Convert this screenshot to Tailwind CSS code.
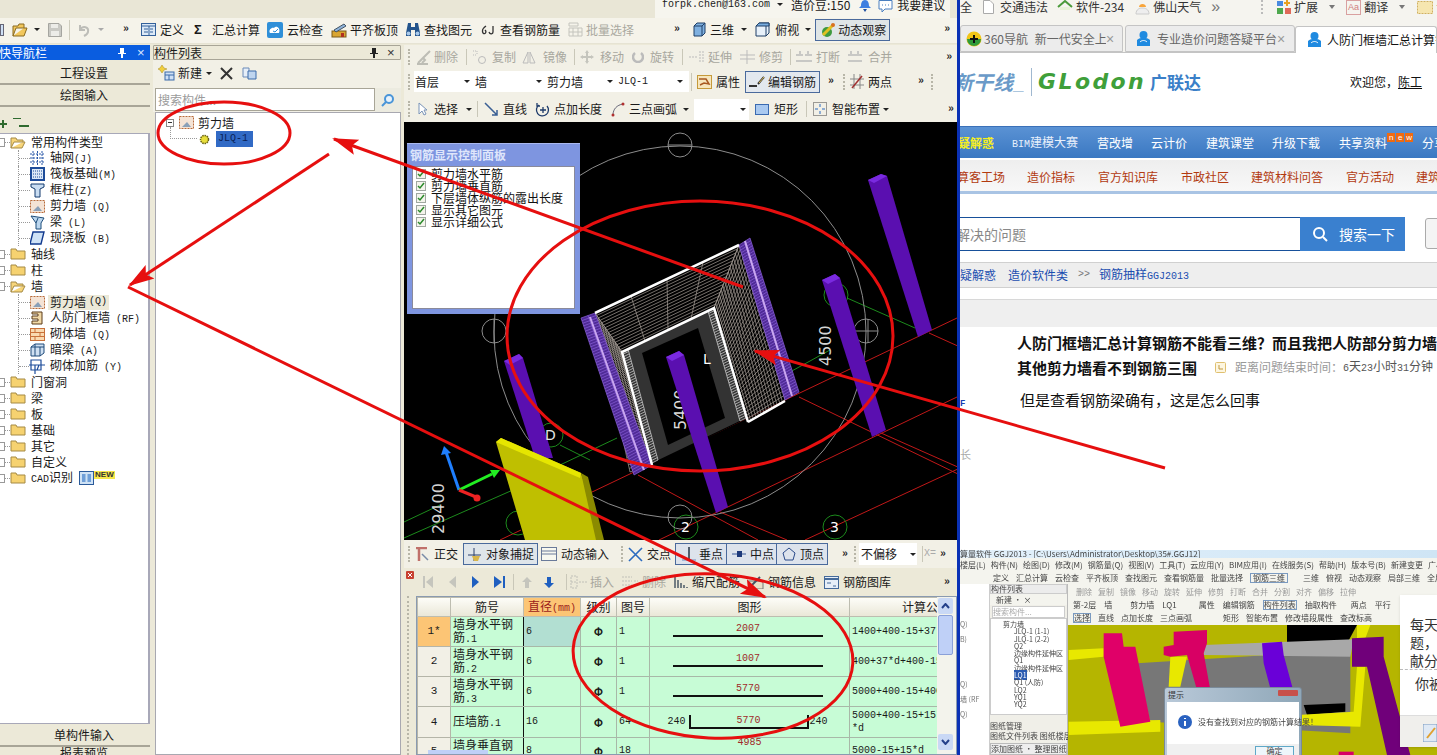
<!DOCTYPE html>
<html lang="zh-CN">
<head>
  <meta charset="UTF-8" />
  <title>钢筋抽样 GGJ2013</title>
  <script src="https://cdn.jsdelivr.net/npm/@tailwindcss/browser@4"></script>
</head>
<body class="bg-white overflow-hidden">
<div class="relative w-[1437px] h-[755px] overflow-hidden flex text-[12px] leading-none text-[#1a1a1a] font-['Noto_Sans_CJK_SC','Liberation_Sans',sans-serif]">

  <!-- software window -->
  <div class="w-[957px] h-full flex-none flex flex-col bg-[#ece9d8]">
    <!-- account strip -->
    <div class="h-[18px] flex-none flex bg-[#e9e6d6]">
      <div class="ml-[655px] w-[295px] h-full bg-[#f6f5ee] flex items-start overflow-hidden whitespace-nowrap [&>*]:flex-none">
        <span class="ml-[7px] font-['Liberation_Mono'] text-[10px] leading-[10px]">forpk.chen@163.com</span>
        <i class="ml-[7px] mt-[3px] w-0 h-0 border-x-[3px] border-x-transparent border-t-[3px] border-t-[#222]"></i>
        <span class="ml-[8px] -mt-[1px] leading-[12px]">造价豆:150</span>
        <svg class="ml-[8px]" width="14" height="12" viewBox="0 0 14 12"><path d="M7 0C4 0 3 3 3 6L1 8H13L11 6C11 3 10 0 7 0Z" fill="#3f7fe0"/><path d="M5 9H9L7 12Z" fill="#2050a0"/></svg>
        <svg class="ml-[6px]" width="15" height="13" viewBox="0 0 15 13"><path d="M1 .5H14V9H7L4 12V9H1Z" fill="#fff" stroke="#4a7fc0"/><path d="M4 5H11" stroke="#4a7fc0" stroke-dasharray="1 2"/></svg>
        <span class="ml-[4px] -mt-[1px] leading-[12px]">我要建议</span>
      </div>
    </div>

    <!-- main toolbar -->
    <div class="h-[26px] flex-none flex items-center pb-[2px] bg-[#f5f3ea] border-b border-[#e6e3d3] whitespace-nowrap [&>*]:flex-none">
      <i class="w-[4px] h-[12px] border border-[#667] bg-[#cfe0f5]"></i>
      <svg class="ml-[8px]" width="16" height="14" viewBox="0 0 16 14"><path d="M1 13V3H6L7 1H12V5H4L1 13H12L15 5H12" fill="#f2c75c" stroke="#8a6a20"/></svg>
      <i class="ml-[6px] w-0 h-0 border-x-[3px] border-x-transparent border-t-[3px] border-t-[#222]"></i>
      <svg class="ml-[8px]" width="14" height="14" viewBox="0 0 14 14"><path d="M.5.5H11L13.5 3V13.5H.5Z" fill="#c9c9c4" stroke="#a5a5a0"/><path d="M3 1H10V5H3ZM3 8H11V13H3Z" fill="#ecece8"/></svg>
      <i class="ml-[7px] w-px h-[20px] bg-[#cfcdbe]"></i>
      <svg class="ml-[8px]" width="12" height="14" viewBox="0 0 12 14"><path d="M2 2V7H7M2 7C5 2 11 4 10 9C9.600 11 8 12 6 13" fill="none" stroke="#bdbdb8" stroke-width="2"/></svg>
      <i class="ml-[8px] w-0 h-0 border-x-[3px] border-x-transparent border-t-[3px] border-t-[#aaa]"></i>
      <span class="ml-[19px] -mt-[4px] w-[9px] text-[11px] font-bold">»</span>
      <svg class="ml-[9px]" width="15" height="13" viewBox="0 0 15 13"><rect x=".5" y=".5" width="14" height="12" fill="#dce9f7" stroke="#33609a"/><path d="M1 3H14M3 6H7M3 9H7M9 6H12M9 9H12M8 3V12" stroke="#33609a"/></svg>
      <span class="ml-[4px]">定义</span>
      <span class="ml-[10px] w-[11px] font-bold text-[13px] leading-none font-['Liberation_Sans']">Σ</span>
      <span class="ml-[7px]">汇总计算</span>
      <svg class="ml-[7px]" width="16" height="16" viewBox="0 0 16 16"><rect width="16" height="16" rx="2" fill="#2f8fd8"/><path d="M3 11C1 8 5 5 7 6C9 3 14 6 12 11Z" fill="#fff"/><path d="M6 9L8 10L11 7" stroke="#2f8fd8" fill="none"/></svg>
      <span class="ml-[4px]">云检查</span>
      <svg class="ml-[8px]" width="16" height="16" viewBox="0 0 16 16"><rect x="1" y="9" width="14" height="6" fill="#d9a531" stroke="#7a5a18"/><path d="M3 8L13 2L15 4L5 10Z" fill="#8fb2d9" stroke="#456"/><path d="M10 11H13V15H10Z" fill="#b03020"/></svg>
      <span class="ml-[3px]">平齐板顶</span>
      <svg class="ml-[7px]" width="16" height="15" viewBox="0 0 16 15"><path d="M3 1H6V5H10V1H13L15 11V14H10V8H6V14H1V11Z" fill="#24548c"/><circle cx="3.500" cy="11.500" r="2" fill="#a9c9ea"/><circle cx="12.500" cy="11.500" r="2" fill="#a9c9ea"/></svg>
      <span class="ml-[3px]">查找图元</span>
      <svg class="ml-[9px]" width="15" height="10" viewBox="0 0 15 10"><path d="M5 1C2 3 1 6 2 8C4 10 6 7 4 5M12 1V7C12 9 9 10 8 7" fill="none" stroke="#333" stroke-width="1.300"/></svg>
      <span class="ml-[4px]">查看钢筋量</span>
      <svg class="ml-[8px]" width="15" height="15" viewBox="0 0 15 15"><path d="M1 1H10V4H1ZM1 6H14V14H1ZM5 6V14M10 6V14M1 10H14" fill="none" stroke="#c4c4bd"/></svg>
      <span class="ml-[3px] text-[#aaa9a0]">批量选择</span>
      <span class="ml-[40px] -mt-[4px] w-[9px] text-[11px] font-bold">»</span>
      <svg class="ml-[10px]" width="13" height="15" viewBox="0 0 13 15"><path d="M1 4L4 1H12V11L9 14H1Z" fill="#7fb0e0" stroke="#1f3f66"/><path d="M1 4H9V14M9 4L12 1" fill="none" stroke="#1f3f66"/></svg>
      <span class="ml-[4px]">三维</span>
      <i class="ml-[7px] w-0 h-0 border-x-[3px] border-x-transparent border-t-[3px] border-t-[#222]"></i>
      <svg class="ml-[8px]" width="15" height="15" viewBox="0 0 15 15"><path d="M1 4L4 1H14V11L11 14H1Z" fill="#e8f1fa" stroke="#1f3f66"/><path d="M4 1H14V4H1ZM11 4V14" fill="#79aee0" stroke="#1f3f66"/></svg>
      <span class="ml-[5px]">俯视</span>
      <i class="ml-[6px] w-0 h-0 border-x-[3px] border-x-transparent border-t-[3px] border-t-[#222]"></i>
      <div class="ml-[4px] w-[75px] h-[22px] flex items-center bg-[#dfe5e6] border border-[#4a6a9c]">
        <svg class="ml-[4px] flex-none" width="16" height="16" viewBox="0 0 16 16"><circle cx="7" cy="10" r="5" fill="#3f9a3f"/><path d="M3 13L13 3" stroke="#e0c020" stroke-width="3"/><circle cx="13" cy="3" r="2" fill="#d87020"/></svg>
        <span class="ml-[2px]">动态观察</span>
      </div>
      <span class="ml-[54px] -mt-[4px] w-[9px] text-[11px] font-bold">»</span>
    </div>

    <!-- panels -->
    <div class="flex-1 flex min-h-0 pt-px">
      <!-- navigation -->
      <div class="w-[150px] flex-none flex flex-col">
        <div class="h-[15px] flex-none flex items-center bg-[#0a5de0] text-white text-[12px] overflow-hidden whitespace-nowrap [&>*]:flex-none">
          <span class="-ml-[1px]">快导航栏</span>
          <svg class="ml-[71px]" width="8" height="10" viewBox="0 0 8 10"><path d="M2 0H6V5H8V6H5V10H3V6H0V5H2Z" fill="#fff"/></svg>
          <span class="ml-[11px] text-[13px] font-['Liberation_Sans'] text-[#dbe6ff]">×</span>
        </div>
        <div class="mt-[3px] h-[22px] flex-none flex items-center justify-center bg-[#ece9d8] border-b-2 border-[#a8a597] pl-[18px]">工程设置</div>
        <div class="h-[22px] flex-none flex items-center justify-center bg-[#ece9d8] border-b-2 border-[#a8a597] pl-[18px]">绘图输入</div>
        <div class="h-[26px] flex-none flex items-end pb-[5px]">
          <svg class="-ml-[1px]" width="8" height="8" viewBox="0 0 8 8"><path d="M3 0H5V3H8V5H5V8H3V5H0V3H3Z" fill="#2f6a2f"/></svg>
          <svg class="ml-[6px]" width="16" height="10" viewBox="0 0 16 10"><path d="M0 0H8V1H0ZM6 7H16V9H6Z" fill="#2f6a2f"/></svg>
        </div>
        <div class="flex-1 min-h-0 bg-white border-y border-r-2 border-[#a8a8b8] overflow-hidden whitespace-nowrap">
          <div class="flex items-center h-4"><i class="w-[5px] h-[9px] border-y border-r border-[#999]"></i><i class="w-[5px] border-t border-dotted border-[#999]"></i><svg width="16" height="13" viewBox="0 0 16 13"><path d="M1 12V2H6L7 4H13V6H4L1 12H12L15 6H13" fill="#f7d57a" stroke="#a58a45"/></svg><span class="ml-[5px]">常用构件类型</span></div>
          <div class="flex items-center h-4"><i class="ml-[18px] w-[12px] h-full border-l border-dotted border-[#999] flex items-center"><b class="w-full border-t border-dotted border-[#999]"></b></i><svg width="15" height="14" viewBox="0 0 15 14"><path d="M3 0V14M7.500 0V14M12 0V14M0 3H15M0 7H15M0 11H15" stroke="#2a58a8" stroke-dasharray="2 1"/></svg><span class="ml-[5px]">轴网<span class="font-['Liberation_Mono'] text-[10px]">(J)</span></span></div>
          <div class="flex items-center h-4"><i class="ml-[18px] w-[12px] h-full border-l border-dotted border-[#999] flex items-center"><b class="w-full border-t border-dotted border-[#999]"></b></i><svg width="15" height="14" viewBox="0 0 15 14"><rect x="1" y="1" width="13" height="12" fill="#dbe8f7" stroke="#1d4c9a" stroke-width="2"/><path d="M3 4H12M3 7H12M3 10H12" stroke="#1d4c9a" stroke-dasharray="1 1"/></svg><span class="ml-[5px]">筏板基础<span class="font-['Liberation_Mono'] text-[10px]">(M)</span></span></div>
          <div class="flex items-center h-4"><i class="ml-[18px] w-[12px] h-full border-l border-dotted border-[#999] flex items-center"><b class="w-full border-t border-dotted border-[#999]"></b></i><svg width="15" height="15" viewBox="0 0 15 15"><path d="M1 1H14V4L10 6V14H5V6L1 4Z" fill="#c9ddf2" stroke="#123a6e"/></svg><span class="ml-[5px]">框柱<span class="font-['Liberation_Mono'] text-[10px]">(Z)</span></span></div>
          <div class="flex items-center h-4"><i class="ml-[18px] w-[12px] h-full border-l border-dotted border-[#999] flex items-center"><b class="w-full border-t border-dotted border-[#999]"></b></i><svg width="15" height="13" viewBox="0 0 15 13"><rect x=".5" y=".5" width="14" height="12" fill="#f4e3d5" stroke="#b86a3a" stroke-dasharray="2 1"/><path d="M3 11L8 6L12 11Z" fill="#8aa0b8"/></svg><span class="ml-[5px]">剪力墙<span class="font-['Liberation_Mono'] text-[10px]"> (Q)</span></span></div>
          <div class="flex items-center h-4"><i class="ml-[18px] w-[12px] h-full border-l border-dotted border-[#999] flex items-center"><b class="w-full border-t border-dotted border-[#999]"></b></i><svg width="15" height="15" viewBox="0 0 15 15"><path d="M1 1L14 3L11 8V14H6V8Z" fill="#bcd7ef" stroke="#1d4c7a"/><path d="M6 8L8 3" stroke="#1d4c7a"/></svg><span class="ml-[5px]">梁<span class="font-['Liberation_Mono'] text-[10px]"> (L)</span></span></div>
          <div class="flex items-center h-4"><i class="ml-[18px] w-[12px] h-full border-l border-dotted border-[#999] flex items-center"><b class="w-full border-t border-dotted border-[#999]"></b></i><svg width="15" height="15" viewBox="0 0 15 15"><path d="M3 1H14L11 13H0Z" fill="#cfe2f6" stroke="#123a8e" stroke-width="1.400"/></svg><span class="ml-[5px]">现浇板<span class="font-['Liberation_Mono'] text-[10px]"> (B)</span></span></div>
          <div class="flex items-center h-4"><i class="w-[5px] h-[9px] border-y border-r border-[#999]"></i><i class="w-[5px] border-t border-dotted border-[#999]"></i><svg width="16" height="12" viewBox="0 0 16 12"><path d="M1 11V1H6L7 3H15V11Z" fill="#f6d270" stroke="#a58a45"/></svg><span class="ml-[5px]">轴线</span></div>
          <div class="flex items-center h-4"><i class="w-[5px] h-[9px] border-y border-r border-[#999]"></i><i class="w-[5px] border-t border-dotted border-[#999]"></i><svg width="16" height="12" viewBox="0 0 16 12"><path d="M1 11V1H6L7 3H15V11Z" fill="#f6d270" stroke="#a58a45"/></svg><span class="ml-[5px]">柱</span></div>
          <div class="flex items-center h-4"><i class="w-[5px] h-[9px] border-y border-r border-[#999]"></i><i class="w-[5px] border-t border-dotted border-[#999]"></i><svg width="16" height="13" viewBox="0 0 16 13"><path d="M1 12V2H6L7 4H13V6H4L1 12H12L15 6H13" fill="#f7d57a" stroke="#a58a45"/></svg><span class="ml-[5px]">墙</span></div>
          <div class="flex items-center h-4"><i class="ml-[18px] w-[12px] h-full border-l border-dotted border-[#999] flex items-center"><b class="w-full border-t border-dotted border-[#999]"></b></i><svg width="15" height="13" viewBox="0 0 15 13"><rect x=".5" y=".5" width="14" height="12" fill="#f4e3d5" stroke="#b86a3a" stroke-dasharray="2 1"/><path d="M3 11L8 6L12 11Z" fill="#8aa0b8"/></svg><span class="ml-[3px] px-[2px] h-[15px] flex items-center gap-[3px] bg-[#ece9d8]">剪力墙<span class="font-['Liberation_Mono'] text-[10px]">(Q)</span></span></div>
          <div class="flex items-center h-4"><i class="ml-[18px] w-[12px] h-full border-l border-dotted border-[#999] flex items-center"><b class="w-full border-t border-dotted border-[#999]"></b></i><svg width="15" height="14" viewBox="0 0 15 14"><path d="M2 1H12V13H2V10H8V8H2V5H8V3H2Z" fill="#f1d9a8" stroke="#5a3a18"/></svg><span class="ml-[5px]">人防门框墙<span class="font-['Liberation_Mono'] text-[10px]"> (RF)</span></span></div>
          <div class="flex items-center h-4"><i class="ml-[18px] w-[12px] h-full border-l border-dotted border-[#999] flex items-center"><b class="w-full border-t border-dotted border-[#999]"></b></i><svg width="15" height="13" viewBox="0 0 15 13"><rect x=".5" y=".5" width="14" height="12" fill="#f9d9b0" stroke="#c8703a"/><path d="M0 4.500H15M0 8.500H15M5 .500V4.500M10 4.500V8.500M5 8.500V12.500" stroke="#c8703a"/></svg><span class="ml-[5px]">砌体墙<span class="font-['Liberation_Mono'] text-[10px]"> (Q)</span></span></div>
          <div class="flex items-center h-4"><i class="ml-[18px] w-[12px] h-full border-l border-dotted border-[#999] flex items-center"><b class="w-full border-t border-dotted border-[#999]"></b></i><svg width="15" height="14" viewBox="0 0 15 14"><path d="M1 4L5 1H14V10L10 13H1Z" fill="#cfe0f2" stroke="#1f4a7a"/><path d="M5 1V13M10 4V13M1 4H14" stroke="#1f4a7a"/></svg><span class="ml-[5px]">暗梁<span class="font-['Liberation_Mono'] text-[10px]"> (A)</span></span></div>
          <div class="flex items-center h-4"><i class="ml-[18px] w-[11px] h-full border-l border-dotted border-[#999] flex items-center"><b class="w-full border-t border-dotted border-[#999]"></b></i><svg width="16" height="15" viewBox="0 0 16 15"><path d="M2 1H12V11H2ZM0 6H16M6 6V15M10 6L8 11" fill="none" stroke="#1d4c9a" stroke-width="1.200"/></svg><span class="ml-[5px]">砌体加筋<span class="font-['Liberation_Mono'] text-[10px]"> (Y)</span></span></div>
          <div class="flex items-center h-4"><i class="w-[5px] h-[9px] border-y border-r border-[#999]"></i><i class="w-[5px] border-t border-dotted border-[#999]"></i><svg width="16" height="12" viewBox="0 0 16 12"><path d="M1 11V1H6L7 3H15V11Z" fill="#f6d270" stroke="#a58a45"/></svg><span class="ml-[5px]">门窗洞</span></div>
          <div class="flex items-center h-4"><i class="w-[5px] h-[9px] border-y border-r border-[#999]"></i><i class="w-[5px] border-t border-dotted border-[#999]"></i><svg width="16" height="12" viewBox="0 0 16 12"><path d="M1 11V1H6L7 3H15V11Z" fill="#f6d270" stroke="#a58a45"/></svg><span class="ml-[5px]">梁</span></div>
          <div class="flex items-center h-4"><i class="w-[5px] h-[9px] border-y border-r border-[#999]"></i><i class="w-[5px] border-t border-dotted border-[#999]"></i><svg width="16" height="12" viewBox="0 0 16 12"><path d="M1 11V1H6L7 3H15V11Z" fill="#f6d270" stroke="#a58a45"/></svg><span class="ml-[5px]">板</span></div>
          <div class="flex items-center h-4"><i class="w-[5px] h-[9px] border-y border-r border-[#999]"></i><i class="w-[5px] border-t border-dotted border-[#999]"></i><svg width="16" height="12" viewBox="0 0 16 12"><path d="M1 11V1H6L7 3H15V11Z" fill="#f6d270" stroke="#a58a45"/></svg><span class="ml-[5px]">基础</span></div>
          <div class="flex items-center h-4"><i class="w-[5px] h-[9px] border-y border-r border-[#999]"></i><i class="w-[5px] border-t border-dotted border-[#999]"></i><svg width="16" height="12" viewBox="0 0 16 12"><path d="M1 11V1H6L7 3H15V11Z" fill="#f6d270" stroke="#a58a45"/></svg><span class="ml-[5px]">其它</span></div>
          <div class="flex items-center h-4"><i class="w-[5px] h-[9px] border-y border-r border-[#999]"></i><i class="w-[5px] border-t border-dotted border-[#999]"></i><svg width="16" height="12" viewBox="0 0 16 12"><path d="M1 11V1H6L7 3H15V11Z" fill="#f6d270" stroke="#a58a45"/></svg><span class="ml-[5px]">自定义</span></div>
          <div class="flex items-center h-4"><i class="w-[5px] h-[9px] border-y border-r border-[#999]"></i><i class="w-[5px] border-t border-dotted border-[#999]"></i><svg width="16" height="12" viewBox="0 0 16 12"><path d="M1 11V1H6L7 3H15V11Z" fill="#f6d270" stroke="#a58a45"/></svg><span class="ml-[5px]"><span class="font-['Liberation_Mono'] text-[10px]">CAD</span>识别</span>
            <svg class="ml-[6px]" width="15" height="14" viewBox="0 0 15 14"><rect x=".5" y=".5" width="14" height="13" fill="#cfe2f5" stroke="#2a5a9a"/><path d="M3 3H6.500V11H3ZM8.500 3H12V11H8.500Z" fill="#6f9fd8"/></svg>
            <span class="-mt-[7px] text-[8px] font-bold text-[#333] bg-[#f6e84a] px-[1px] font-['Liberation_Sans']">NEW</span></div>
        </div>
        <div class="mt-px h-[22px] flex-none flex items-center justify-center border-b-2 border-[#a8a597] pl-[18px]">单构件输入</div>
        <div class="h-[8px] flex-none flex items-start justify-center pl-[18px] overflow-hidden">报表预览</div>
      </div>

      <!-- component list -->
      <div class="ml-[3px] w-[248px] flex-none flex flex-col whitespace-nowrap">
        <div class="h-[15px] flex-none flex items-center border border-[#a8a597] rounded-[1px] [&>*]:flex-none">
          <span>构件列表</span>
          <svg class="ml-[168px]" width="8" height="10" viewBox="0 0 8 10"><path d="M2 0H6V5H8V6H5V10H3V6H0V5H2Z" fill="#222"/></svg>
          <span class="ml-[9px] text-[13px] font-['Liberation_Sans'] text-[#333]">×</span>
        </div>
        <div class="h-[28px] flex-none flex items-center pb-[2px] bg-[#f2f0e6] [&>*]:flex-none">
          <svg class="ml-[5px]" width="17" height="16" viewBox="0 0 17 16"><path d="M4 0L6 3L9 4L6 5L4 8L2 5L0 4L2 3Z" fill="#f2cf3c" stroke="#a68a20" stroke-width=".5"/><rect x="7" y="7" width="9" height="8" fill="#cfe0f5" stroke="#3a6aaa"/><path d="M7 10H16M11 10V15" stroke="#3a6aaa"/></svg>
          <span class="ml-[3px]">新建</span>
          <i class="ml-[4px] w-0 h-0 border-x-[3px] border-x-transparent border-t-[3px] border-t-[#222]"></i>
          <svg class="ml-[8px]" width="13" height="13" viewBox="0 0 13 13"><path d="M1 1L12 12M12 1L1 12" stroke="#333" stroke-width="2"/></svg>
          <svg class="ml-[9px]" width="15" height="13" viewBox="0 0 15 13"><path d="M1 1H7V10H1Z" fill="#e6eef8" stroke="#6a8ab8"/><path d="M6 4H14V12H6Z" fill="#bfd5ef" stroke="#3a6aaa"/></svg>
        </div>
        <div class="h-[24px] flex-none flex bg-[#f2f0e6]">
          <div class="ml-[2px] w-[220px] h-[23px] bg-white border border-[#a8a597] flex items-center pl-[2px] text-[#9b9b9b] text-[12px]">搜索构件...</div>
          <div class="flex-1 flex items-center justify-center bg-[#ecebe0]">
            <svg width="14" height="14" viewBox="0 0 14 14"><circle cx="8" cy="6" r="4" fill="#e7f2fc" stroke="#4a95d8" stroke-width="2"/><path d="M5 9L1 13" stroke="#4a95d8" stroke-width="2"/></svg>
          </div>
        </div>
        <div class="flex-1 min-h-0 ml-[2px] bg-white border border-[#a8a8b0] pt-[1px]">
          <div class="flex items-center h-[17px]"><i class="ml-[10px] w-[8px] h-[8px] border border-[#888] flex items-center justify-center"><b class="w-[4px] border-t border-[#333]"></b></i><svg class="ml-[5px]" width="15" height="13" viewBox="0 0 15 13"><rect x=".5" y=".5" width="14" height="12" fill="#f4e3d5" stroke="#b86a3a" stroke-dasharray="2 1"/><path d="M3 11L8 6L12 11Z" fill="#8aa0b8"/></svg><span class="ml-[4px]">剪力墙</span></div>
          <div class="flex items-center h-[16px]"><i class="ml-[14px] w-[27px] h-[12px] -mt-[12px] border-l border-b border-dotted border-[#999]"></i><svg class="ml-[2px]" width="11" height="11" viewBox="0 0 11 11"><circle cx="5.500" cy="5.500" r="4" fill="#e8de3a" stroke="#6a6418" stroke-dasharray="1.500 .8" stroke-width="1.500"/></svg><span class="ml-[6px] px-[2px] h-[16px] w-[37px] flex items-center bg-[#316ac5] text-[#0a1f55] font-['Liberation_Mono'] text-[10px]">JLQ-1</span></div>
        </div>
      </div>

      <!-- drawing area -->
      <div class="ml-[3px] flex-1 min-w-0 flex flex-col whitespace-nowrap">
        <div class="h-[25px] flex-none flex items-center bg-[#f2f0e6] text-[#a8a79e] pb-[1px] [&>*]:flex-none">
          <i class="ml-[4px] w-[2px] h-[16px] border-l-2 border-dotted border-[#b8b6a8]"></i>
          <svg class="ml-[6px]" width="16" height="16" viewBox="0 0 16 16"><path d="M2 14L14 2M1 15H12M4 12L7 9L9 11L6 14" fill="none" stroke="#bdbdb5" stroke-width="2"/></svg>
          <span class="ml-[2px]">删除</span>
          <i class="ml-[8px] w-px h-[16px] bg-[#c9c7b8]"></i>
          <svg class="ml-[5px]" width="14" height="14" viewBox="0 0 14 14"><circle cx="10" cy="10" r="3.500" fill="none" stroke="#bbb"/><path d="M1 1H5M1 5H5M5 1V5" stroke="#bbb" stroke-dasharray="1 1"/></svg>
          <span class="ml-[6px]">复制</span>
          <svg class="ml-[6px]" width="14" height="14" viewBox="0 0 14 14"><path d="M6 2L1 13H6ZM8 2L13 13H8Z" fill="none" stroke="#bbb"/></svg>
          <span class="ml-[7px]">镜像</span>
          <i class="ml-[7px] w-px h-[16px] bg-[#c9c7b8]"></i>
          <svg class="ml-[5px]" width="14" height="14" viewBox="0 0 14 14"><path d="M7 0L9 3H8V6H11V5L14 7L11 9V8H8V11H9L7 14L5 11H6V8H3V9L0 7L3 5V6H6V3H5Z" fill="#c5c5bd"/></svg>
          <span class="ml-[6px]">移动</span>
          <svg class="ml-[8px]" width="12" height="12" viewBox="0 0 12 12"><path d="M3 2A5 5 0 1 0 9 2" fill="none" stroke="#bbb" stroke-width="2.500"/></svg>
          <span class="ml-[6px]">旋转</span>
          <i class="ml-[8px] w-px h-[16px] bg-[#c9c7b8]"></i>
          <svg class="ml-[6px]" width="15" height="14" viewBox="0 0 15 14"><path d="M0 7H8M11 1V13M14 1V13" stroke="#bbb" stroke-dasharray="2 1"/></svg>
          <span class="ml-[4px]">延伸</span>
          <svg class="ml-[8px]" width="15" height="14" viewBox="0 0 15 14"><path d="M0 5H15M0 9H15M7 0V14" stroke="#bbb"/></svg>
          <span class="ml-[4px]">修剪</span>
          <i class="ml-[7px] w-px h-[16px] bg-[#c9c7b8]"></i>
          <svg class="ml-[5px]" width="16" height="12" viewBox="0 0 16 12"><path d="M0 4H7M9 4H16M0 10H16M4 0V3M12 0V3" stroke="#bbb" stroke-width="1.500"/></svg>
          <span class="ml-[4px]">打断</span>
          <svg class="ml-[8px]" width="14" height="12" viewBox="0 0 14 12"><path d="M0 4H14M0 10H14M3 0V3M10 0V3" stroke="#bbb" stroke-width="1.500"/></svg>
          <span class="ml-[6px]">合并</span>
          <span class="ml-[54px] -mt-[4px] w-[9px] text-[11px] font-bold text-[#222]">»</span>
        </div>
        <div class="h-[26px] flex-none flex items-center bg-[#f2f0e6] pb-[3px] [&>*]:flex-none">
          <i class="ml-[4px] w-[2px] h-[16px] border-l-2 border-dotted border-[#b8b6a8]"></i>
          <div class="ml-[4px] w-[60px] h-[21px] flex items-center bg-white pl-[1px]">首层<i class="ml-[25px] w-0 h-0 border-x-[3px] border-x-transparent border-t-[3px] border-t-[#222]"></i></div>
          <div class="w-[72px] h-[21px] flex items-center bg-white pl-[1px]">墙<i class="ml-[49px] w-0 h-0 border-x-[3px] border-x-transparent border-t-[3px] border-t-[#222]"></i></div>
          <div class="w-[71px] h-[21px] flex items-center bg-white pl-[1px]">剪力墙<i class="ml-[24px] w-0 h-0 border-x-[3px] border-x-transparent border-t-[3px] border-t-[#222]"></i></div>
          <div class="w-[72px] h-[21px] flex items-center bg-white pl-[1px]"><span class="w-[30px] font-['Liberation_Mono'] text-[10px]">JLQ-1</span><i class="ml-[29px] w-0 h-0 border-x-[3px] border-x-transparent border-t-[3px] border-t-[#222]"></i></div>
          <i class="ml-[2px] w-px h-[18px] bg-[#c9c7b8]"></i>
          <svg class="ml-[5px]" width="15" height="14" viewBox="0 0 15 14"><rect x=".5" y=".5" width="14" height="13" fill="#f7e6bc" stroke="#c59a3a"/><path d="M2 4H9L12 9L7 8L3 10" fill="none" stroke="#a85820" stroke-width="1.500"/></svg>
          <span class="ml-[4px]">属性</span>
          <div class="ml-[5px] w-[75px] h-[22px] flex items-center bg-[#e3e8ee] border border-[#4a6a9c]">
            <svg class="ml-[3px] flex-none" width="16" height="14" viewBox="0 0 16 14"><path d="M0 11H8M9 9L15 2" stroke="#333" stroke-width="2"/><path d="M10 8L15 2" stroke="#e0c060"/></svg>
            <span class="ml-[3px]">编辑钢筋</span>
          </div>
          <span class="ml-[8px] -mt-[4px] w-[9px] text-[11px] font-bold">»</span>
          <i class="ml-[6px] w-[2px] h-[16px] border-l-2 border-dotted border-[#b8b6a8]"></i>
          <svg class="ml-[5px]" width="14" height="15" viewBox="0 0 14 15"><path d="M0 5H14M0 11H14M4 0V15M10 0V15" stroke="#888"/><path d="M2 14L12 2" stroke="#a03030" stroke-width="1.500"/></svg>
          <span class="ml-[4px]">两点</span>
          <span class="ml-[26px] -mt-[4px] w-[9px] text-[11px] font-bold">»</span>
          <i class="ml-[4px] w-[2px] h-[16px] border-l-2 border-dotted border-[#b8b6a8]"></i>
        </div>
        <div class="h-[26px] flex-none flex items-center bg-[#f2f0e6] [&>*]:flex-none">
          <i class="ml-[4px] w-[2px] h-[16px] border-l-2 border-dotted border-[#b8b6a8]"></i>
          <svg class="ml-[7px]" width="11" height="14" viewBox="0 0 11 14"><path d="M2 1V12L5 9L7 13L9 12L7 8H10Z" fill="#fff" stroke="#7a94b8"/></svg>
          <span class="ml-[6px]">选择</span>
          <i class="ml-[8px] w-0 h-0 border-x-[3px] border-x-transparent border-t-[3px] border-t-[#222]"></i>
          <i class="ml-[5px] w-px h-[16px] bg-[#c9c7b8]"></i>
          <svg class="ml-[6px]" width="14" height="14" viewBox="0 0 14 14"><path d="M1 1L13 13M13 8V13H8" fill="none" stroke="#3a5f94" stroke-width="1.500"/></svg>
          <span class="ml-[5px]">直线</span>
          <svg class="ml-[8px]" width="15" height="15" viewBox="0 0 15 15"><path d="M4 3A6 6 0 1 0 12 4M2 1V4H5M8 5V11M5 8H11" fill="none" stroke="#1d3a6a" stroke-width="1.300"/></svg>
          <span class="ml-[4px]">点加长度</span>
          <svg class="ml-[9px]" width="14" height="15" viewBox="0 0 14 15"><path d="M2 13C2 7 6 3 12 2" fill="none" stroke="#667"/><circle cx="2" cy="13" r="1.500" fill="#b03030"/><circle cx="12" cy="2" r="1.500" fill="#b03030"/></svg>
          <span class="ml-[4px]">三点画弧</span>
          <i class="ml-[6px] w-0 h-0 border-x-[3px] border-x-transparent border-t-[3px] border-t-[#222]"></i>
          <div class="ml-[5px] w-[55px] h-[21px] flex items-center justify-end pr-[3px] bg-white"><i class="w-0 h-0 border-x-[3px] border-x-transparent border-t-[3px] border-t-[#222]"></i></div>
          <svg class="ml-[6px]" width="14" height="11" viewBox="0 0 14 11"><rect x=".5" y=".5" width="13" height="10" fill="#a9c9f0" stroke="#3a6ab0"/></svg>
          <span class="ml-[5px]">矩形</span>
          <i class="ml-[8px] w-px h-[16px] bg-[#c9c7b8]"></i>
          <svg class="ml-[6px]" width="14" height="14" viewBox="0 0 14 14"><rect x=".5" y=".5" width="13" height="13" fill="none" stroke="#444" stroke-dasharray="1 1"/><path d="M7 2V5M7 9V12M2 7H5M9 7H12" stroke="#2a6ac0"/></svg>
          <span class="ml-[5px]">智能布置</span>
          <i class="ml-[3px] w-0 h-0 border-x-[3px] border-x-transparent border-t-[3px] border-t-[#222]"></i>
          <span class="ml-[59px] -mt-[4px] w-[9px] text-[11px] font-bold">»</span>
        </div>

        <!-- 3D view -->
        <div class="relative h-[418px] flex-none bg-black overflow-hidden">
          <svg class="absolute inset-0" width="553" height="418" viewBox="404 122 553 418">
            <g stroke="#c01818" stroke-width="1" fill="none">
              <path d="M590 493L957 318M500 540L521 530M659 540L957 397M805 540L960 468"/>
              <path d="M799 397L960 475M881 433L960 468M929 333L960 347M638 475L758 540M720 512L787 540"/>
            </g>
            <g stroke="#1c8a1c" stroke-width="1" fill="none">
              <path d="M404 538L531 482M560 465L617 438M659 418L716 388M790 372L830 350M847 298L915 328M404 522L440 505M560 445L590 460"/>
              <circle cx="551" cy="435" r="12"/><circle cx="686" cy="527" r="12"/><circle cx="835" cy="527" r="12"/><circle cx="705" cy="358" r="12"/><circle cx="836" cy="295" r="12"/><circle cx="518" cy="523" r="12"/>
            </g>
            <g stroke="#8c8c8c" stroke-width="1" fill="none">
              <circle cx="680" cy="332" r="186"/>
              <circle cx="680" cy="145" r="12"/><circle cx="494" cy="331" r="12"/><circle cx="866" cy="331" r="12"/><circle cx="680" cy="517" r="12"/>
              <path d="M668 145H692M494 319V343M854 331H878M868 319V343"/>
            </g>
            <!-- wall with door opening -->
            <polygon points="595,313 739,245 785,400 652,465" fill="#000"/>
            <g id="mesh"></g>
            <polygon points="622,352 714,308 746,418 652,463" fill="#333"/>
            <polygon points="642,353 698,328 725,418 668,445" fill="#000"/>
            <g id="fringe"></g>
            <polygon points="581,318 595,313 652,465 634,475" fill="#4f2a96"/>
            <polygon points="739,245 750,238 799,392 785,400" fill="#4f2a96"/>
            <g id="bands"></g>
            <path d="M590 317L644 470M745 241L792 396" stroke="#c9a6f0" stroke-width="2"/>
            <path d="M595 313L739 245M652 465L622 352L714 308L748 422M748 422L785 401" fill="none" stroke="#fff" stroke-width="2.500"/>
            <text x="686" y="430" transform="rotate(-90 686 430)" fill="#ddd" font-size="16" font-family="DejaVu Sans">5400</text>
            <!-- columns -->
            <g fill="#5a0fb0">
              <polygon points="868,180 881,174 887,176 932,330 918,337"/>
              <polygon points="822,280 835,274 840,278 886,430 872,437"/>
              <polygon points="504,361 519,354 523,358 553,458 535,458"/>
              <polygon points="666,357 679,351 684,355 728,507 716,513"/>
            </g>
            <g fill="#7a2ae0">
              <polygon points="868,180 881,174 887,176 874,183"/>
              <polygon points="822,280 835,274 840,278 828,284"/>
              <polygon points="504,361 519,354 523,358 510,365"/>
              <polygon points="666,357 679,351 684,355 672,361"/>
            </g>
            <!-- yellow wall end -->
            <polygon points="496,442 501,438 581,473 603,540 525,540" fill="#bfbf00"/>
            <polygon points="496,442 501,438 581,473 580,478" fill="#e6e600"/>
            <polygon points="581,473 588,477 604,540 596,540" fill="#8a8a00"/>
            <!-- axes -->
            <path d="M459 490L446 452" stroke="#1f7fff" stroke-width="3"/><polygon points="444,446 441,455 451,453" fill="#1f7fff"/>
            <path d="M459 490L492 474" stroke="#22ee22" stroke-width="3"/><polygon points="500,470 490,470 494,478" fill="#22ee22"/>
            <path d="M459 490L476 497" stroke="#ee2222" stroke-width="3"/><circle cx="477" cy="498" r="3.500" fill="#ee2222"/>
            <g font-family="DejaVu Sans" fill="#d5d5d5">
              <text x="831" y="366" transform="rotate(-90 831 366)" font-size="16">4500</text>
              <text x="444" y="534" transform="rotate(-90 444 534)" font-size="16">29400</text>
              <text x="545" y="440" font-size="14" fill="#e5e5e5">D</text>
              <text x="681" y="532" font-size="14" fill="#fff">2</text>
              <text x="830" y="532" font-size="14" fill="#fff">3</text>
              <text x="703" y="364" font-size="14" fill="#fff">L</text>
            </g>
          </svg>
          <!-- rebar display panel -->
          <div class="absolute left-[3px] top-[21px] w-[173px] h-[171px] bg-[#7e95e0] border-t border-[#a9b8ee] flex flex-col">
            <div class="h-[22px] flex items-center pl-[3px] font-bold text-[#dfe6fb]">钢筋显示控制面板</div>
            <div class="mx-[5px] flex-1 mb-[5px] bg-white border border-[#8a8a9a] pl-[3px] pt-[1px] text-[#111] leading-[12px]">
              <div class="flex items-center h-[12px]"><i class="w-[10px] h-[10px] border border-[#a0a8a0] bg-[#f4f4ec] flex items-center justify-center"><svg width="8" height="8" viewBox="0 0 8 8"><path d="M1 4L3 6L7 1" fill="none" stroke="#2a8a2a" stroke-width="1.500"/></svg></i><span class="ml-[5px]">剪力墙水平筋</span></div>
              <div class="flex items-center h-[12px]"><i class="w-[10px] h-[10px] border border-[#a0a8a0] bg-[#f4f4ec] flex items-center justify-center"><svg width="8" height="8" viewBox="0 0 8 8"><path d="M1 4L3 6L7 1" fill="none" stroke="#2a8a2a" stroke-width="1.500"/></svg></i><span class="ml-[5px]">剪力墙垂直筋</span></div>
              <div class="flex items-center h-[12px]"><i class="w-[10px] h-[10px] border border-[#a0a8a0] bg-[#f4f4ec] flex items-center justify-center"><svg width="8" height="8" viewBox="0 0 8 8"><path d="M1 4L3 6L7 1" fill="none" stroke="#2a8a2a" stroke-width="1.500"/></svg></i><span class="ml-[5px]">下层墙体纵筋的露出长度</span></div>
              <div class="flex items-center h-[12px]"><i class="w-[10px] h-[10px] border border-[#a0a8a0] bg-[#f4f4ec] flex items-center justify-center"><svg width="8" height="8" viewBox="0 0 8 8"><path d="M1 4L3 6L7 1" fill="none" stroke="#2a8a2a" stroke-width="1.500"/></svg></i><span class="ml-[5px]">显示其它图元</span></div>
              <div class="flex items-center h-[12px]"><i class="w-[10px] h-[10px] border border-[#a0a8a0] bg-[#f4f4ec] flex items-center justify-center"><svg width="8" height="8" viewBox="0 0 8 8"><path d="M1 4L3 6L7 1" fill="none" stroke="#2a8a2a" stroke-width="1.500"/></svg></i><span class="ml-[5px]">显示详细公式</span></div>
            </div>
          </div>
        </div>

        <!-- snap toolbar -->
        <div class="h-[28px] flex-none flex items-center bg-[#f2f0e6] [&>*]:flex-none">
          <i class="ml-[4px] w-[2px] h-[16px] border-l-2 border-dotted border-[#b8b6a8]"></i>
          <svg class="ml-[5px]" width="15" height="15" viewBox="0 0 15 15"><path d="M1 1H12M4 1V14" stroke="#c0706a" stroke-width="2.500"/><path d="M7 7L13 13" stroke="#7a8ca8" stroke-width="1.500"/></svg>
          <span class="ml-[4px]">正交</span>
          <div class="ml-[5px] w-[75px] h-[22px] flex items-center bg-[#dfe5ea] border border-[#4a6a9c]">
            <svg class="ml-[3px] flex-none" width="15" height="15" viewBox="0 0 15 15"><path d="M1 8H14M7 1V14" stroke="#2a3f6a"/><path d="M5 9H13L11 14H7Z" fill="#d9b64a"/></svg>
            <span class="ml-[4px]">对象捕捉</span>
          </div>
          <svg class="ml-[3px]" width="16" height="14" viewBox="0 0 16 14"><rect x=".5" y=".5" width="15" height="13" fill="#f8f8f0" stroke="#6a7a9a"/><path d="M1 4H15M1 7H15" stroke="#6a7a9a"/></svg>
          <span class="ml-[4px]">动态输入</span>
          <i class="ml-[12px] w-[2px] h-[16px] border-l-2 border-dotted border-[#b8b6a8]"></i>
          <svg class="ml-[5px]" width="15" height="15" viewBox="0 0 15 15"><path d="M1 1L14 14M14 1L1 14" stroke="#2a6ac0" stroke-width="1.600"/></svg>
          <span class="ml-[4px]">交点</span>
          <div class="ml-[4px] w-[52px] h-[22px] flex items-center justify-end pr-[3px] bg-[#dde3ec] border border-[#4a6a9c]">
            <svg class="mr-[3px] flex-none" width="14" height="15" viewBox="0 0 14 15"><path d="M0 13H14" stroke="#6a8ac0"/><path d="M7 0V13" stroke="#234" stroke-width="1.500"/></svg>
            <span>垂点</span>
          </div>
          <div class="w-[50px] h-[22px] flex items-center justify-end pr-[2px] bg-[#dde3ec] border-y border-r border-[#4a6a9c]">
            <svg class="mr-[4px] flex-none" width="14" height="6" viewBox="0 0 14 6"><path d="M0 3H14" stroke="#3a5a9a"/><rect x="5" y="0" width="5" height="6" fill="#1d3a7a"/></svg>
            <span>中点</span>
          </div>
          <div class="w-[51px] h-[22px] flex items-center justify-end pr-[3px] bg-[#dde3ec] border-y border-r border-[#4a6a9c]">
            <svg class="mr-[4px] flex-none" width="14" height="14" viewBox="0 0 14 14"><path d="M7 1L13 6L11 13H3L1 6Z" fill="none" stroke="#2a4a8a"/></svg>
            <span>顶点</span>
          </div>
          <span class="ml-[14px] -mt-[4px] w-[9px] text-[11px] font-bold">»</span>
          <i class="ml-[3px] w-[2px] h-[16px] border-l-2 border-dotted border-[#b8b6a8]"></i>
          <div class="ml-[3px] w-[58px] h-[22px] flex items-center bg-white pl-[2px]">不偏移<i class="ml-[13px] w-0 h-0 border-x-[3px] border-x-transparent border-t-[3px] border-t-[#222]"></i></div>
          <i class="ml-[5px] w-px h-[16px] bg-[#c9c7b8]"></i>
          <span class="ml-[1px] text-[#aaa] font-['Liberation_Mono'] text-[10px]">X=</span>
          <span class="ml-[4px] -mt-[4px] w-[9px] text-[11px] font-bold">»</span>
        </div>

        <!-- rebar table toolbar -->
        <div class="h-[28px] flex-none flex items-center bg-[#ece9d8] [&>*]:flex-none">
          <svg class="ml-[2px] -mt-[14px]" width="8" height="8" viewBox="0 0 8 8"><rect width="8" height="8" rx="1" fill="#c84030"/><path d="M2 2L6 6M6 2L2 6" stroke="#fff"/></svg>
          <svg class="ml-[9px]" width="11" height="12" viewBox="0 0 11 12"><path d="M1 0V12" stroke="#c5c5bd" stroke-width="2"/><path d="M10 0L3 6L10 12Z" fill="#c5c5bd"/></svg>
          <svg class="ml-[15px]" width="7" height="12" viewBox="0 0 7 12"><path d="M7 0L0 6L7 12Z" fill="#c5c5bd"/></svg>
          <svg class="ml-[16px]" width="7" height="12" viewBox="0 0 7 12"><path d="M0 0L7 6L0 12Z" fill="#1f5fc0"/></svg>
          <svg class="ml-[15px]" width="11" height="12" viewBox="0 0 11 12"><path d="M10 0V12" stroke="#1f5fc0" stroke-width="2"/><path d="M0 0L8 6L0 12Z" fill="#1f5fc0"/></svg>
          <i class="ml-[8px] w-px h-[16px] bg-[#c9c7b8]"></i>
          <svg class="ml-[8px]" width="10" height="11" viewBox="0 0 10 11"><path d="M5 0L10 5H7V11H3V5H0Z" fill="#c5c5bd"/></svg>
          <svg class="ml-[12px]" width="10" height="11" viewBox="0 0 10 11"><path d="M3 0H7V6H10L5 11L0 6H3Z" fill="#1f5fc0"/></svg>
          <i class="ml-[12px] w-px h-[16px] bg-[#c9c7b8]"></i>
          <svg class="ml-[3px]" width="18" height="14" viewBox="0 0 18 14"><path d="M1 1H7V13H1ZM1 7H7M9 7H17" fill="none" stroke="#c0c0b8" stroke-dasharray="2 1"/></svg>
          <span class="ml-[2px] text-[#a8a79e]">插入</span>
          <svg class="ml-[7px]" width="18" height="12" viewBox="0 0 18 12"><path d="M1 1H11M1 5H11M1 9H11M13 5H17" fill="none" stroke="#c0c0b8" stroke-dasharray="2 1"/></svg>
          <span class="ml-[3px] text-[#a8a79e]">删除</span>
          <svg class="ml-[8px]" width="16" height="14" viewBox="0 0 16 14"><path d="M1 1V13M4 5V13M7 8V13M10 10V13M13 12V13" stroke="#345" stroke-width="1.300"/></svg>
          <span class="ml-[2px]">缩尺配筋</span>
          <svg class="ml-[8px]" width="16" height="14" viewBox="0 0 16 14"><rect y="6" width="15" height="8" fill="#e7e0c8" stroke="#777"/><path d="M4 10L12 2" stroke="#456" stroke-width="2"/></svg>
          <span class="ml-[4px]">钢筋信息</span>
          <svg class="ml-[8px]" width="15" height="13" viewBox="0 0 15 13"><rect x=".5" y=".5" width="14" height="12" fill="#e7eff8" stroke="#456a9a"/><path d="M1 3H14" stroke="#456a9a" stroke-width="2"/><path d="M3 7H7M9 10H12" stroke="#456a9a"/></svg>
          <span class="ml-[4px]">钢筋图库</span>
          <span class="ml-[53px] -mt-[4px] w-[9px] text-[11px] font-bold">»</span>
        </div>

        <!-- rebar table -->
        <div class="relative flex-1 min-h-0 flex bg-[#ece9d8] pl-[12px] whitespace-normal">
          <i class="absolute left-[3px] top-0 h-full border-l-2 border-dotted border-[#b8b6a8]"></i>
          <div class="w-[541px] border border-[#8a9ab0] overflow-hidden relative">
            <table class="table-fixed w-[521px] border-collapse bg-[#c7fcd6]">
              <colgroup><col class="w-[33px]"><col class="w-[73px]"><col class="w-[57px]"><col class="w-[36px]"><col class="w-[33px]"><col class="w-[200px]"><col class="w-[89px]"></colgroup>
              <tr class="h-[19px] bg-gradient-to-b from-[#fdfdf8] to-[#e9e6d6] text-center">
                <th class="font-normal border border-[#bdbdb0]"></th>
                <th class="font-normal border border-[#bdbdb0]">筋号</th>
                <th class="font-normal border border-[#bdbdb0] bg-[#fcc575] text-[#9a1a1a]">直径<span class="font-['Liberation_Mono'] text-[10px]">(mm)</span></th>
                <th class="font-normal border border-[#bdbdb0]">级别</th>
                <th class="font-normal border border-[#bdbdb0]">图号</th>
                <th class="font-normal border border-[#bdbdb0]">图形</th>
                <th class="font-normal border border-[#bdbdb0] text-right whitespace-nowrap overflow-hidden">计算公</th>
              </tr>
              <tr class="h-[28px]">
                <td class="text-center bg-[#fcc575] border border-[#b5b5a8] font-['Liberation_Mono'] text-[11px]">1*</td>
                <td class="border border-[#a8b8a8] border-r-[#111] px-[2px] leading-[13px]">墙身水平钢筋<span class="font-['Liberation_Mono'] text-[10px]">.1</span></td>
                <td class="border border-[#a8b8a8] bg-[#b2dfd2] pl-[2px] font-['Liberation_Mono'] text-[10px]">6</td>
                <td class="border border-[#a8b8a8] text-center text-[11px] font-bold">Φ</td>
                <td class="border border-[#a8b8a8] pl-[2px] font-['Liberation_Mono'] text-[10px]">1</td>
                <td class="border border-[#a8b8a8]"><div class="ml-[23px] mb-[3px] w-[150px] text-center text-[#a02a2a] font-['Liberation_Mono'] text-[10px] leading-[12px] border-b-2 border-[#111]">2007</div></td>
                <td class="border border-[#a8b8a8] pl-[2px] whitespace-nowrap overflow-hidden font-['Liberation_Mono'] text-[10px]">1400+400-15+37*d</td>
              </tr>
              <tr class="h-[28px]">
                <td class="text-center bg-[#f2f0e6] border border-[#b5b5a8] font-['Liberation_Mono'] text-[11px]">2</td>
                <td class="border border-[#a8b8a8] border-r-[#111] px-[2px] leading-[13px]">墙身水平钢筋<span class="font-['Liberation_Mono'] text-[10px]">.2</span></td>
                <td class="border border-[#a8b8a8] pl-[2px] font-['Liberation_Mono'] text-[10px]">6</td>
                <td class="border border-[#a8b8a8] text-center text-[11px] font-bold">Φ</td>
                <td class="border border-[#a8b8a8] pl-[2px] font-['Liberation_Mono'] text-[10px]">1</td>
                <td class="border border-[#a8b8a8]"><div class="ml-[23px] mb-[3px] w-[150px] text-center text-[#a02a2a] font-['Liberation_Mono'] text-[10px] leading-[12px] border-b-2 border-[#111]">1007</div></td>
                <td class="border border-[#a8b8a8] pl-[2px] whitespace-nowrap overflow-hidden font-['Liberation_Mono'] text-[10px]">400+37*d+400-15</td>
              </tr>
              <tr class="h-[28px]">
                <td class="text-center bg-[#f2f0e6] border border-[#b5b5a8] font-['Liberation_Mono'] text-[11px]">3</td>
                <td class="border border-[#a8b8a8] border-r-[#111] px-[2px] leading-[13px]">墙身水平钢筋<span class="font-['Liberation_Mono'] text-[10px]">.3</span></td>
                <td class="border border-[#a8b8a8] pl-[2px] font-['Liberation_Mono'] text-[10px]">6</td>
                <td class="border border-[#a8b8a8] text-center text-[11px] font-bold">Φ</td>
                <td class="border border-[#a8b8a8] pl-[2px] font-['Liberation_Mono'] text-[10px]">1</td>
                <td class="border border-[#a8b8a8]"><div class="ml-[23px] mb-[3px] w-[150px] text-center text-[#a02a2a] font-['Liberation_Mono'] text-[10px] leading-[12px] border-b-2 border-[#111]">5770</div></td>
                <td class="border border-[#a8b8a8] pl-[2px] whitespace-nowrap overflow-hidden font-['Liberation_Mono'] text-[10px]">5000+400-15+400</td>
              </tr>
              <tr class="h-[31px]">
                <td class="text-center bg-[#f2f0e6] border border-[#b5b5a8] font-['Liberation_Mono'] text-[11px]">4</td>
                <td class="border border-[#a8b8a8] border-r-[#111] px-[2px]">压墙筋<span class="font-['Liberation_Mono'] text-[10px]">.1</span></td>
                <td class="border border-[#a8b8a8] pl-[2px] font-['Liberation_Mono'] text-[10px]">16</td>
                <td class="border border-[#a8b8a8] text-center text-[11px] font-bold">Φ</td>
                <td class="border border-[#a8b8a8] pl-[2px] font-['Liberation_Mono'] text-[10px]">64</td>
                <td class="border border-[#a8b8a8]"><div class="flex justify-center items-center pr-[4px] font-['Liberation_Mono'] text-[10px]"><span>240</span><div class="ml-[3px] mr-[1px] w-[120px] h-[14px] border-x-2 border-b-2 border-[#111] text-center text-[#a02a2a] leading-[12px]">5770</div><span>240</span></div></td>
                <td class="border border-[#a8b8a8] pl-[2px] font-['Liberation_Mono'] text-[10px] leading-[13px] overflow-hidden"><div class="whitespace-nowrap">5000+400-15+15*</div>*d</td>
              </tr>
              <tr class="h-[29px] align-top">
                <td class="text-center bg-[#f2f0e6] border border-[#b5b5a8] font-['Liberation_Mono'] text-[11px] pt-[8px]">5</td>
                <td class="border border-[#a8b8a8] border-r-[#111] px-[2px] leading-[13px]">墙身垂直钢筋</td>
                <td class="border border-[#a8b8a8] pl-[2px] font-['Liberation_Mono'] text-[10px] pt-[8px]">8</td>
                <td class="border border-[#a8b8a8] text-center text-[11px] font-bold pt-[8px]">Φ</td>
                <td class="border border-[#a8b8a8] pl-[2px] font-['Liberation_Mono'] text-[10px] pt-[8px]">18</td>
                <td class="border border-[#a8b8a8] text-center text-[#a02a2a] font-['Liberation_Mono'] text-[10px]">4985</td>
                <td class="border border-[#a8b8a8] pl-[2px] pt-[8px] whitespace-nowrap overflow-hidden font-['Liberation_Mono'] text-[10px]">5000-15+15*d</td>
              </tr>
            </table>
            <!-- vertical scrollbar -->
            <div class="absolute top-0 right-0 w-[19px] h-full bg-[#f3f3ec] pl-[1px] flex flex-col">
              <div class="w-[15px] h-[16px] mt-[1px] bg-[#c9d8f5] rounded-[2px] flex items-center justify-center"><svg width="9" height="6" viewBox="0 0 9 6"><path d="M1 5L4.500 1L8 5" fill="none" stroke="#25418a" stroke-width="2"/></svg></div>
              <div class="w-[15px] h-[40px] mt-px bg-[#bfd0f7] border border-[#8aa0d8] rounded-[2px]"></div>
              <div class="flex-1"></div>
              <div class="w-[15px] h-[16px] mb-[4px] bg-[#c9d8f5] rounded-[2px] flex items-center justify-center"><svg width="9" height="6" viewBox="0 0 9 6"><path d="M1 1L4.500 5L8 1" fill="none" stroke="#25418a" stroke-width="2"/></svg></div>
            </div>
            <div class="absolute left-[11px] bottom-0 w-[60px] h-[4px] bg-[#bfd0f7]"></div>
          </div>
        </div>
      </div>
    </div>
  </div>

  <!-- task separator -->
  <div class="w-[3px] flex-none h-full bg-[#0a31b5]"></div>

  <!-- browser window -->
  <div class="relative flex-1 min-w-0 h-full flex flex-col bg-white overflow-hidden whitespace-nowrap">
    <!-- favourites bar -->
    <div class="h-[25px] flex-none flex items-center pb-[11px] bg-[#f5f4ef] text-[#333] [&>*]:flex-none">
      <span>全</span>
      <svg class="ml-[11px]" width="11" height="14" viewBox="0 0 11 14"><path d="M.5.5H7L10.500 4V13.500H.5Z" fill="#fff" stroke="#aaa"/></svg>
      <span class="ml-[6px]">交通违法</span>
      <svg class="ml-[9px]" width="16" height="15" viewBox="0 0 16 15"><path d="M1 7L8 1L15 7" fill="none" stroke="#4a9a3a" stroke-width="2"/><path d="M3 7H13V10H3Z" fill="#e8f2d8"/></svg>
      <span class="ml-[3px]">软件-234</span>
      <svg class="ml-[11px]" width="15" height="15" viewBox="0 0 15 15"><path d="M1 14C1 9 5 8 7 8C10 8 14 9 14 14Z" fill="#eee" stroke="#ccc"/><path d="M4 7C4 3 11 3 11 7Z" fill="#f8a53a"/></svg>
      <span class="ml-[3px]">佛山天气</span>
      <span class="ml-[10px] text-[16px] text-[#777] font-['Liberation_Sans']">»</span>
      <i class="ml-[41px] w-[2px] h-[14px] border-l-2 border-dotted border-[#bbb]"></i>
      <svg class="ml-[14px]" width="15" height="15" viewBox="0 0 15 15"><rect x="0" y="8" width="6" height="6" fill="#4ea84e"/><rect x="8" y="8" width="6" height="6" fill="#e06a5a"/><rect x="0" y="1" width="6" height="5" fill="#4a8ae0"/><path d="M10 0V6M7 3H13" stroke="#e8a020" stroke-width="2"/></svg>
      <span class="ml-[2px]">扩展</span>
      <i class="ml-[11px] w-0 h-0 border-x-[3px] border-x-transparent border-t-[4px] border-t-[#777]"></i>
      <span class="ml-[11px] w-[15px] h-[15px] border border-[#d9a0a0] text-[#d08080] text-[9px] flex items-center justify-center font-['Liberation_Sans']">Aa</span>
      <span class="ml-[3px]">翻译</span>
      <i class="ml-[11px] w-0 h-0 border-x-[3px] border-x-transparent border-t-[4px] border-t-[#777]"></i>
      <svg class="ml-[12px]" width="16" height="15" viewBox="0 0 16 15"><rect x=".5" y="1.500" width="15" height="12" fill="#f6e6b0" stroke="#d0b060" stroke-dasharray="2 1"/></svg>
      <span class="ml-[3px]">计</span>
    </div>
    <!-- tabs -->
    <div class="h-[27px] flex-none flex bg-[#f5f4ef] text-[#666]">
      <div class="w-[163px] flex-none h-full flex items-center bg-[#ececec] border border-[#c4c4c4] rounded-t-[3px] overflow-hidden">
        <svg class="ml-[5px] flex-none" width="16" height="16" viewBox="0 0 16 16"><circle cx="8" cy="8" r="7.500" fill="#f2c518"/><path d="M1 8A7 7 0 0 0 15 8Z" fill="#2f9a3a"/><path d="M8 4V12M4 8H12" stroke="#111" stroke-width="2"/></svg>
        <span class="ml-[2px] w-[122px] flex-none overflow-hidden">360导航_新一代安全上</span>
        <span class="text-[14px] text-[#999] font-['Liberation_Sans']">×</span>
      </div>
      <div class="ml-[2px] w-[170px] flex-none h-full flex items-center bg-[#ececec] border border-[#c4c4c4] rounded-t-[3px] overflow-hidden">
        <svg class="ml-[10px] flex-none" width="15" height="16" viewBox="0 0 15 16"><circle cx="7.500" cy="4" r="4" fill="#1f8ae0"/><path d="M1 15V9C4 6 11 6 14 9V15Z" fill="#1f8ae0"/><path d="M4 11C6 9 9 9 11 11" stroke="#fff" fill="none"/></svg>
        <span class="ml-[6px] w-[120px] flex-none overflow-hidden">专业造价问题答疑平台</span>
        <span class="text-[14px] text-[#999] font-['Liberation_Sans']">×</span>
      </div>
      <div class="flex-1 h-full flex items-center bg-white border-t border-x border-[#c4c4c4] rounded-t-[3px] overflow-hidden text-[#111] relative top-px">
        <svg class="ml-[11px] flex-none" width="15" height="16" viewBox="0 0 15 16"><circle cx="7.500" cy="4" r="4" fill="#1f8ae0"/><path d="M1 15V9C4 6 11 6 14 9V15Z" fill="#1f8ae0"/><path d="M4 11C6 9 9 9 11 11" stroke="#fff" fill="none"/></svg>
        <span class="ml-[5px] flex-none">人防门框墙汇总计算钢筋</span>
      </div>
    </div>
    <!-- site header -->
    <div class="h-[74px] flex-none flex items-center pb-[16px] bg-white border-t border-[#c4c4c4] [&>*]:flex-none">
      <span class="w-[71px] -ml-[7px] text-[20px] leading-none italic font-bold text-[#6a9ac8] overflow-hidden">新干线_</span>
      <i class="ml-[7px] w-px h-[28px] bg-[#a0b8d0]"></i>
      <span class="ml-[6px] w-[108px] text-[22px] leading-none italic font-bold text-[#3f9f3a] font-['DejaVu_Sans'] tracking-[2.4px]">GLodon</span>
      <span class="ml-[4px] text-[17px] font-bold text-[#3a7fc8]">广联达</span>
      <span class="ml-[149px] text-[#111]">欢迎您，<span class="underline">陈工</span></span>
    </div>
    <!-- site nav -->
    <div class="h-[32px] flex-none flex items-center bg-gradient-to-b from-[#5a92d4] to-[#3a78c2] text-white border-t border-[#3a70b8] [&>*]:flex-none">
      <span class="font-bold text-[#f6f020] w-[34px] flex justify-end overflow-hidden"><span class="flex-none">疑解惑</span></span>
      <span class="ml-[18px] text-[#e8f0fb]"><span class="font-['Liberation_Mono'] text-[10px]">BIM</span>建模大赛</span>
      <span class="ml-[19px]">营改增</span>
      <span class="ml-[18px]">云计价</span>
      <span class="ml-[19px]">建筑课堂</span>
      <span class="ml-[18px]">升级下载</span>
      <span class="ml-[19px]">共享资料</span>
      <span class="-mt-[11px] flex gap-[1px] text-[8px] font-['Liberation_Sans']"><b class="w-[8px] h-[9px] leading-[9px] text-center bg-[#f06a10] font-normal">n</b><b class="w-[8px] h-[9px] leading-[9px] text-center bg-[#f06a10] font-normal">e</b><b class="w-[8px] h-[9px] leading-[9px] text-center bg-[#f06a10] font-normal">w</b></span>
      <span class="ml-[9px]">分享</span>
    </div>
    <!-- site sub nav -->
    <div class="mt-[2px] h-[34px] flex-none flex items-center pt-[3px] bg-gradient-to-b from-[#eeeeee] to-[#f8f8f8] border-b-[3px] border-[#a9c4e4] text-[#b23a10] overflow-hidden [&>*]:flex-none">
      <span class="-ml-[3px]">算客工场</span>
      <span class="ml-[22px]">造价指标</span>
      <span class="ml-[23px]">官方知识库</span>
      <span class="ml-[23px]">市政社区</span>
      <span class="ml-[22px]">建筑材料问答</span>
      <span class="ml-[23px]">官方活动</span>
      <span class="ml-[22px]">建筑行业</span>
    </div>
    <!-- search -->
    <div class="mt-[23px] h-[34px] flex-none flex [&>*]:flex-none">
      <div class="w-[340px] h-full flex items-center bg-white border-y border-[#17509a] text-[14px] text-[#888] overflow-hidden">
        <span class="-ml-[4px]">解决的问题</span>
      </div>
      <div class="w-[105px] h-full flex items-center bg-[#3a80cf] text-white text-[14px]">
        <svg class="ml-[13px] flex-none" width="15" height="15" viewBox="0 0 15 15"><circle cx="6" cy="6" r="5" fill="none" stroke="#fff" stroke-width="2"/><path d="M10 10L14 14" stroke="#fff" stroke-width="2"/></svg>
        <span class="ml-[11px]">搜索一下</span>
      </div>
      <div class="ml-[20px] w-[20px] h-[31px] mt-px bg-[#f4f4f4] border border-[#aaa] rounded-[3px]"></div>
    </div>
    <!-- breadcrumb -->
    <div class="mt-[11px] h-[26px] flex-none flex items-center bg-[#eeeeee] border-y border-[#d0d0d0] text-[#1a4db0] [&>*]:flex-none">
      <span>疑解惑</span>
      <span class="ml-[12px]">造价软件类</span>
      <span class="ml-[10px] text-[#777] font-['Liberation_Mono'] text-[10px]">&gt;&gt;</span>
      <span class="ml-[9px]">钢筋抽样<span class="font-['Liberation_Mono'] text-[10px]">GGJ2013</span></span>
    </div>
    <div class="mt-[11px] h-[28px] flex-none bg-[#efefef] border-t border-[#d8d8d8]"></div>
    <!-- question -->
    <div class="flex-none pl-[57px] text-[#111]">
      <div class="mt-[4px] text-[15px] leading-[24px] font-bold">人防门框墙汇总计算钢筋不能看三维？而且我把人防部分剪力墙</div>
      <div class="flex items-center h-[24px] text-[15px] font-bold [&>*]:flex-none">
        <span>其他剪力墙看不到钢筋三围</span>
        <svg class="ml-[18px]" width="11" height="11" viewBox="0 0 11 11"><rect x=".5" y=".5" width="10" height="10" rx="1" fill="#fdf6e0" stroke="#e0c070"/><path d="M4 3V7H8" fill="none" stroke="#c09840"/></svg>
        <span class="ml-[9px] text-[12px] font-normal text-[#999]">距离问题结束时间：</span>
        <span class="text-[12px] font-normal text-[#555]"><span class="font-['Liberation_Mono'] text-[10px]">6</span>天<span class="font-['Liberation_Mono'] text-[10px]">23</span>小时<span class="font-['Liberation_Mono'] text-[10px]">31</span>分钟</span>
      </div>
      <div class="mt-[9px] ml-[3px] text-[15px] leading-[24px] font-normal">但是查看钢筋梁确有，这是怎么回事</div>
    </div>

    <!-- pasted screenshot -->
    <div class="absolute left-0 bottom-0 w-[477px] h-[207px] bg-[#f0efe8] flex flex-col text-[8px] text-[#444] overflow-hidden">
      <div class="h-[2px] flex-none bg-white"></div>
      <div class="h-[8px] flex-none flex items-center bg-gradient-to-r from-[#e3f1fb] to-[#cfe5f5] blur-[0.4px]">算量软件 GGJ2013 - [C:\Users\Administrator\Desktop\35#.GGJ12]</div>
      <div class="h-[14px] flex-none flex items-center gap-[5px] bg-[#f4f4ee] blur-[0.4px] [&>*]:flex-none"><span>楼层(L)</span><span>构件(N)</span><span>绘图(D)</span><span>修改(M)</span><span>钢筋量(Q)</span><span>视图(V)</span><span>工具(T)</span><span>云应用(Y)</span><span>BIM应用(I)</span><span>在线服务(S)</span><span>帮助(H)</span><span>版本号(B)</span><span>新建变更</span><span>广小二</span></div>
      <div class="h-[12px] flex-none flex items-center gap-[7px] pl-[33px] bg-[#f4f4ee] blur-[0.4px] [&>*]:flex-none"><span>定义</span><span>汇总计算</span><span>云检查</span><span>平齐板顶</span><span>查找图元</span><span>查看钢筋量</span><span>批量选择</span><span class="px-[2px] border border-[#7a9ac0]">钢筋三维</span><span class="ml-[8px]">三维</span><span>俯视</span><span>动态观察</span><span>局部三维</span><span>全屏</span><span>缩放</span></div>
      <div class="flex-1 min-h-0 flex">
        <div class="w-[30px] flex-none bg-white border-r border-[#ccc] text-[7px] text-[#777] pt-[37px] space-y-[8px] blur-[0.4px]"><div>Q)</div><div>B)</div><div class="pt-[30px]">Q)</div><div>墙 (RF</div><div>Q)</div></div>
        <div class="w-[78px] flex-none flex flex-col border-r border-[#bbb] blur-[0.4px]">
          <div class="h-[10px] flex-none flex items-center bg-[#ececec] border border-[#ccc]">构件列表</div>
          <div class="h-[11px] flex-none flex items-center pl-[6px] bg-[#f4f4ee]">新建 · ×</div>
          <div class="mt-[1px] h-[12px] flex-none flex items-center mx-[2px] bg-white border border-[#ccc] text-[#aaa]">搜索构件...</div>
          <div class="h-[97px] flex-none bg-white border border-[#ccc] pl-[12px] pt-[2px] leading-[7.300px] text-[7px] overflow-hidden">
            <div>剪力墙</div><div class="pl-[11px]">JLQ-1 (1-1)</div><div class="pl-[11px]">JLQ-1 (2-2)</div><div class="pl-[11px]">Q2</div><div class="pl-[11px]">边缘构件延伸区</div><div class="pl-[11px]">Q1</div><div class="pl-[11px]">边缘构件延伸区</div><div class="pl-[11px]"><span class="bg-[#2a5ab0] text-white">LQ1</span></div><div class="pl-[11px]">Q1 (人防)</div><div class="pl-[11px]">LQ2</div><div class="pl-[11px]">YQ1</div><div class="pl-[11px]">YQ2</div>
          </div>
          <div class="mt-[6px] h-[9px] flex-none flex items-center">图纸管理</div>
          <div class="h-[11px] flex-none flex items-center">图纸文件列表 图纸楼层</div>
          <div class="mt-[2px] h-[12px] flex-none flex items-center border border-[#bbb] bg-[#eee]">添加图纸 · 整理图纸</div>
        </div>
        <div class="flex-1 min-w-0 flex flex-col">
          <div class="h-[14px] flex-none flex items-center gap-[6px] pl-[8px] pt-[2px] bg-[#f4f4ee] text-[#999] blur-[0.4px] [&>*]:flex-none"><span>删除</span><span>复制</span><span>镜像</span><span>移动</span><span>旋转</span><span>延伸</span><span>修剪</span><span>打断</span><span>合并</span><span>分割</span><span>对齐</span><span>偏移</span><span>拉伸</span></div>
          <div class="h-[13px] flex-none flex items-center gap-[8px] pl-[5px] bg-[#f4f4ee] blur-[0.4px] [&>*]:flex-none"><span>第-2层</span><span>墙</span><span class="ml-[10px]">剪力墙</span><span>LQ1</span><span class="ml-[14px]">属性</span><span>编辑钢筋</span><span class="border border-[#7a9ac0]">构件列表</span><span>抽取构件</span><span class="ml-[6px]">两点</span><span>平行</span></div>
          <div class="h-[14px] flex-none flex items-center gap-[7px] pl-[5px] bg-[#f4f4ee] blur-[0.4px] [&>*]:flex-none"><span class="border border-[#7a9ac0]">选择</span><span>直线</span><span>点加长度</span><span>三点画弧</span><span class="ml-[24px]">矩形</span><span>智能布置</span><span>修改墙段属性</span><span>查改标高</span></div>
          <div class="flex-1 min-h-0">
            <svg class="block blur-[0.4px]" width="369" height="130" viewBox="333 255 1107 390" preserveAspectRatio="none">
              <rect x="333" y="255" width="1107" height="390" fill="#b5b500"/>
              <polygon points="990,255 1200,255 1165,320 990,315" fill="#000"/>
              <polygon points="540,370 1180,330 1180,580 580,545" fill="#777"/>
              <polygon points="740,315 1190,298 1180,350 740,345" fill="#a8a8a8"/>
              <polygon points="1040,495 1165,490 1165,515 1050,525" fill="#000"/>
              <polygon points="335,330 440,325 440,350 335,360" fill="#e8e800"/>
              <polygon points="335,545 610,540 610,575 335,585" fill="#e8e800"/>
              <polygon points="1020,525 1190,515 1200,380 1225,380 1210,560 1020,555" fill="#e8e800"/>
              <polygon points="1200,255 1240,255 1225,295 1200,295" fill="#e8e800"/>
              <polygon points="640,350 690,350 670,440 635,440" fill="#e8e800"/>
              <polygon points="440,280 495,280 500,320 535,320 580,545 490,560 440,350" fill="#e00068"/>
              <polygon points="650,275 750,270 750,310 740,340 760,450 720,450 690,345 640,350 620,345 620,320 650,315" fill="#d80064"/>
              <polygon points="915,310 975,305 980,345 1030,530 960,520 920,370" fill="#6a00d8"/>
              <polygon points="1185,295 1280,290 1280,350 1360,645 1290,645 1230,380 1185,380" fill="#70007a"/>
              <polygon points="1145,635 1190,635 1190,645 1145,645" fill="#d80064"/>
            </svg>
          </div>
        </div>
      </div>
      <!-- message box over the pasted scene -->
      <div class="absolute left-[204px] top-[139px] w-[138px] h-[70px] bg-gradient-to-r from-[#b9c9d9] to-[#8fa7b8] rounded-t-[3px] border border-[#7a8a99] flex flex-col">
        <div class="h-[14px] flex-none flex items-center pl-[3px] text-[#333] relative">提示<i class="absolute right-[3px] top-[2px] w-[20px] h-[6px] bg-[#c8504a] rounded-[1px]"></i></div>
        <div class="mx-[2px] flex-1 bg-white flex items-start pt-[13px] pl-[11px]">
          <svg class="flex-none" width="14" height="14" viewBox="0 0 14 14"><circle cx="7" cy="7" r="7" fill="#2a62c0"/><path d="M7 3V4M7 6V11" stroke="#fff" stroke-width="2"/></svg>
          <span class="ml-[6px] mt-[3px] flex-none blur-[0.3px]">没有查找到对应的钢筋计算结果！</span>
        </div>
        <div class="mx-[2px] h-[12px] flex-none bg-[#f0f0f0] flex justify-end pr-[5px]"><span class="w-[39px] h-[10px] mt-[2px] bg-[#eef6fb] border border-[#5fa8c8] text-center">确定</span></div>
      </div>
      <!-- popup over the pasted scene -->
      <div class="absolute left-[440px] top-[47px] w-[37px] h-[152px] bg-white shadow flex flex-col text-[14px] text-[#333] overflow-hidden">
        <div class="mt-[22px] h-[18px] pl-[10px] w-[70px]">每天被</div>
        <div class="h-[18px] pl-[10px] w-[70px]">题，衍</div>
        <div class="h-[14px] pl-[10px] w-[70px]">献分，</div>
        <div class="mt-[2px] border-t border-dashed border-[#bbb]"></div>
        <div class="mt-[6px] pl-[15px]">你被</div>
        <div class="mt-auto h-[32px] bg-[#f0efec] border-t border-[#ddd] pl-[23px] pt-[8px]"><svg width="14" height="18" viewBox="0 0 14 18"><rect width="14" height="18" fill="#dfe9f5" stroke="#7a9ac0"/><path d="M4 14L12 4" stroke="#e0a030" stroke-width="2"/></svg></div>
      </div>
    </div>
    <span class="absolute left-0 top-[400px] text-[9px] text-[#1a3fb0] font-bold font-['Liberation_Mono']">F</span>
    <span class="absolute left-0 top-[449px] text-[11px] text-[#aaa]">长</span>
  </div>

  <!-- hand-drawn red marks -->
  <svg class="absolute inset-0 pointer-events-none" width="1437" height="755" viewBox="0 0 1437 755">
    <defs>
      <marker id="tip" markerUnits="userSpaceOnUse" markerWidth="30" markerHeight="20" refX="24" refY="10" orient="auto"><path d="M0 2L26 10L0 18L5 10Z" fill="#e60f0f"/></marker>
    </defs>
    <g fill="none" stroke="#e60f0f" stroke-width="3">
      <ellipse cx="224" cy="133" rx="66" ry="31"/>
      <ellipse cx="700" cy="336" rx="193" ry="135"/>
      <ellipse cx="713" cy="656" rx="140" ry="82" transform="rotate(3 713 656)"/>
      <path d="M1165 468L755 351" marker-end="url(#tip)"/>
      <path d="M743 287L334 139" marker-end="url(#tip)"/>
      <path d="M329 154L130 285" marker-end="url(#tip)"/>
      <path d="M128 287L765 597" marker-end="url(#tip)"/>
    </g>
  </svg>
</div>

<script>
  // rebar mesh over the wall faces, spaced from the four corners of each face
  function mesh(id, q, nu, nv, color) {
    const g = document.getElementById(id);
    const lerp = (a, b, t) => [a[0] + (b[0] - a[0]) * t, a[1] + (b[1] - a[1]) * t];
    const line = (a, b) => {
      const l = document.createElementNS('http://www.w3.org/2000/svg', 'line');
      l.setAttribute('x1', a[0]); l.setAttribute('y1', a[1]);
      l.setAttribute('x2', b[0]); l.setAttribute('y2', b[1]);
      l.setAttribute('stroke', color); l.setAttribute('stroke-width', '.7');
      g.appendChild(l);
    };
    for (let i = 0; i <= nu; i++) line(lerp(q[0], q[1], i / nu), lerp(q[3], q[2], i / nu));
    for (let i = 0; i <= nv; i++) line(lerp(q[0], q[3], i / nv), lerp(q[1], q[2], i / nv));
  }
  mesh('mesh', [[595, 313], [739, 245], [714, 308], [622, 352]], 4, 16, '#a89f98');
  mesh('mesh', [[714, 308], [739, 245], [785, 400], [748, 422]], 14, 36, '#a89f98');
  mesh('mesh', [[595, 313], [622, 352], [652, 463], [630, 472]], 8, 44, '#a89f98');
  mesh('fringe', [[622, 352], [628, 349], [658, 460], [652, 463]], 1, 46, '#d8d8d8');
  mesh('fringe', [[708, 311], [714, 308], [746, 418], [740, 421]], 1, 46, '#d8d8d8');
  mesh('bands', [[581, 318], [595, 313], [652, 465], [634, 475]], 2, 60, '#8a60d8');
  mesh('bands', [[739, 245], [750, 238], [799, 392], [785, 400]], 2, 60, '#8a60d8');
</script>
</body>
</html>
